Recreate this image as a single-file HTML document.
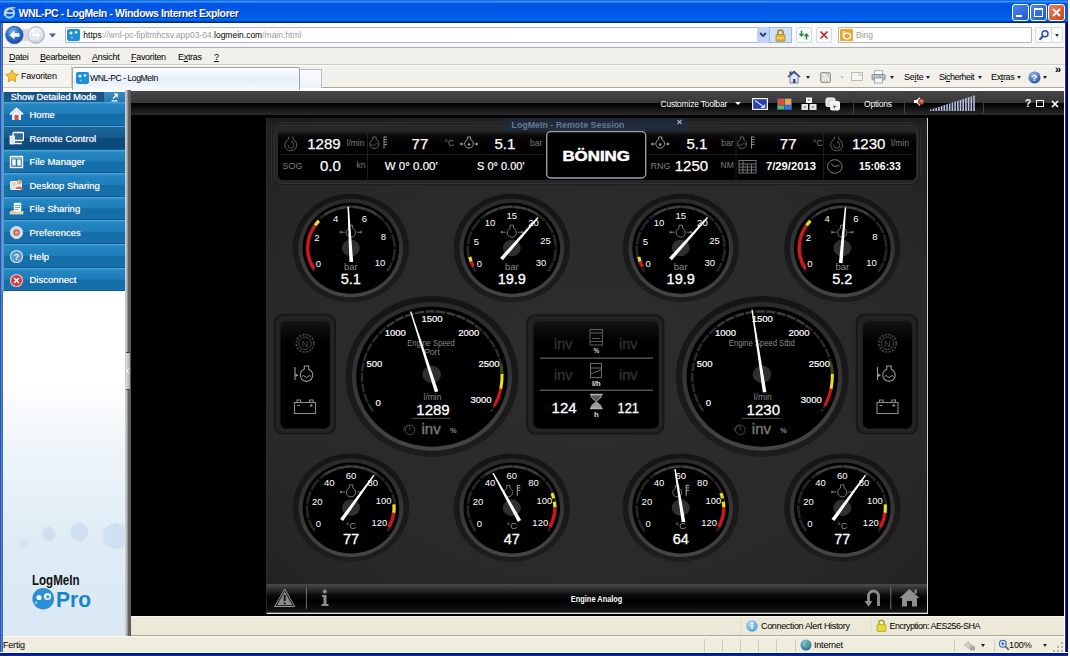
<!DOCTYPE html>
<html lang="de">
<head>
<meta charset="utf-8">
<title>WNL-PC - LogMeIn - Windows Internet Explorer</title>
<style>
*{box-sizing:border-box;margin:0;padding:0}
html,body{width:1070px;height:656px;overflow:hidden;background:#fff}
body{position:relative;font-family:"Liberation Sans",sans-serif;font-size:11px;color:#000}
.abs{position:absolute}
#win{position:absolute;left:0;top:0;width:1068.400px;height:656px;background:linear-gradient(90deg,#2254bd 0,#2254bd 1px,#5a86d4 1px,#5a86d4 2px,#466490 2px,#466490 3px,#fff 3px,#fff 1064px,#fff 1065px,#5565b4 1065px,#00007c 1066px,#00007c 1067.500px,#8c9ad6 1068.400px);overflow:hidden}
#title{position:absolute;left:0;top:0;width:1068.400px;height:22.800px;background:linear-gradient(#0058cc 0,#3c98ff 1.300px,#2a86f6 2px,#0a62e2 3px,#0054e4 4.500px,#0058e6 14px,#0066f2 20px,#0052cc 21.200px,#002a7c 22.300px,#002a7c 22.800px)}
#title .t{position:absolute;left:19px;top:4px;font-size:12.5px;font-weight:bold;color:#fff;letter-spacing:-.1px;text-shadow:1px 1px 0 #0a2a80;white-space:nowrap}
.cap{position:absolute;top:4px;width:17px;height:17px;border:1px solid #fff;border-radius:3px;background:linear-gradient(135deg,#4b87f0,#2356cf)}
#nav{position:absolute;left:3px;top:23px;width:1061px;height:24px;background:linear-gradient(#fdfdfe,#f3f6fb)}
#menu{position:absolute;left:3px;top:47px;width:1061px;height:19px;background:#f1f0ea;border-top:1px solid #aeaea2;border-bottom:1px solid #fbfbf8}
#menu span{position:absolute;top:4px;font-size:9px;letter-spacing:-.3px;white-space:nowrap}
#tabs{position:absolute;left:3px;top:66px;width:1061px;height:25.400px;background:linear-gradient(#f1f0ea 0,#f1f0ea 20.800px,#a8a89c 20.800px,#a8a89c 21.800px,#fdfdfb 21.800px);border-top:0}
#content{position:absolute;left:2px;top:90px;width:1062px;height:546px;overflow:hidden}
#status{position:absolute;left:3px;top:636px;width:1061px;height:16px;background:#efedde;border-top:1px solid #fbfaf5}
u{text-decoration:underline}
#title .t{left:18.500px;top:6.500px;font-size:10.500px;letter-spacing:-.38px}
.ie-logo{position:absolute;left:3px;top:6px;width:13px;height:13px}
.ab{position:absolute;top:4px;height:16px;background:#fff;border:1px solid #a9b7c9;border-radius:1px}
.nbtn{position:absolute;top:4px;width:16px;height:16px;background:#fbfcfd;border:1px solid #d5d9de;border-radius:2px}
.tb9{font-size:9px;white-space:nowrap;position:absolute}
.arr{position:absolute;width:0;height:0;border-left:2.5px solid transparent;border-right:2.5px solid transparent;border-top:3px solid #222}

</style>
</head>
<body>
<div id="win">
  <div id="title"><svg class="ie-logo" viewBox="0 0 13 13"><circle cx="6.5" cy="7" r="4.6" fill="none" stroke="#9fd0f5" stroke-width="2.2"/><path d="M2.5 7h8" stroke="#d8eefc" stroke-width="1.6"/><path d="M1 9.5C2 4 8 .5 12.5 2" fill="none" stroke="#f5d86a" stroke-width="1.2"/></svg><div class="t">WNL-PC - LogMeIn - Windows Internet Explorer</div>
<div class="cap" style="left:1012px"><i class="abs" style="left:3px;top:10px;width:6px;height:2px;background:#fff"></i></div>
<div class="cap" style="left:1030px"><i class="abs" style="left:3px;top:3px;width:9px;height:9px;border:1px solid #fff;border-top-width:2px"></i></div>
<div class="cap" style="left:1048px;background:linear-gradient(135deg,#e8855f,#c9421b)"><svg class="abs" style="left:2px;top:2px" width="11" height="11" viewBox="0 0 11 11"><path d="M2 2l7 7M9 2l-7 7" stroke="#fff" stroke-width="1.8"/></svg></div></div>
  <div class="abs" style="left:0;top:651.700px;width:1070px;height:4.300px;background:linear-gradient(#eefcff 0,#eefcff 1.100px,#00155e 1.300px,#00155e 2.200px,#0c2aa2 2.600px,#0418a0 4.300px)"></div>
<div id="nav">
<svg class="abs" style="left:0;top:0" width="64" height="24" viewBox="0 0 64 24">
 <defs>
  <radialGradient id="gb" cx=".4" cy=".3" r=".8"><stop offset="0" stop-color="#7db4ee"/><stop offset=".5" stop-color="#2a6fd0"/><stop offset="1" stop-color="#103c94"/></radialGradient>
  <radialGradient id="gf" cx=".4" cy=".3" r=".8"><stop offset="0" stop-color="#ffffff"/><stop offset=".6" stop-color="#e4e9f1"/><stop offset="1" stop-color="#bcc5d3"/></radialGradient>
 </defs>
 <path d="M11 2.5a9.5 9.5 0 1 0 .1 0zM33 3a9 9 0 1 0 .1 0z" fill="#c9d0da"/>
 <rect x="14" y="6" width="18" height="12" fill="#d5dbe4"/>
 <circle cx="11.5" cy="12" r="8.6" fill="url(#gb)" stroke="#2a4f95" stroke-width=".8"/>
 <path d="M6.5 12l5-4.6v2.8h5v3.6h-5v2.8z" fill="#fff"/>
 <circle cx="33" cy="12" r="8" fill="url(#gf)" stroke="#a9b2c0" stroke-width=".8"/>
 <path d="M38 12l-5-4.4v2.7h-4.6v3.4H33v2.7z" fill="#fff" stroke="#c5ccd8" stroke-width=".6"/>
 <path d="M46 10.5h7l-3.5 4z" fill="#3c5f95"/>
</svg>
<div class="ab" style="left:62.300px;width:726.300px">
  <svg class="abs" style="left:1px;top:1px" width="13" height="12" viewBox="0 0 13 12"><rect width="13" height="12" rx="2" fill="#1e8fd6"/><circle cx="4" cy="4" r="1.6" fill="#d9f0ff"/><circle cx="9" cy="3.4" r="1.3" fill="#d9f0ff"/><circle cx="5" cy="8.5" r="1" fill="#7fc6f0"/></svg>
  <span class="tb9" style="left:17px;top:2px;font-size:8.500px"><span style="color:#000">https</span><span style="color:#9a9a9a">://wnl-pc-fipltmhcsv.app03-04.</span><span style="color:#000">logmein.com</span><span style="color:#9a9a9a">/main.html</span></span>
  <div class="abs" style="left:690.300px;top:-1px;width:12px;height:16px;background:#c3d3f3;border-radius:2px"><svg class="abs" style="left:2px;top:5px" width="8" height="6" viewBox="0 0 8 6"><path d="M1 1l3 3 3-3" fill="none" stroke="#1f3f8c" stroke-width="1.8"/></svg></div>
  <div class="abs" style="left:702.300px;top:-1px;width:23px;height:16px;background:#cfe2f8;border:1px solid #9db9dc"><svg class="abs" style="left:5px;top:1px" width="11" height="13" viewBox="0 0 11 13"><path d="M2.8 6V3.8a2.7 2.7 0 0 1 5.4 0V6" fill="none" stroke="#b88a1c" stroke-width="1.6"/><rect x="1" y="5.6" width="9" height="6.6" rx=".8" fill="#e9b23a" stroke="#a87a14" stroke-width=".7"/><path d="M1.5 9h8" stroke="#f8e08a" stroke-width="1"/></svg></div>
</div>
<div class="nbtn" style="left:792.500px"><svg class="abs" style="left:1px;top:1px" width="12" height="12" viewBox="0 0 12 12"><path d="M3.5 1.5v5M1.5 4.8l2 2.2 2-2.2" fill="none" stroke="#2a8a3a" stroke-width="1.5"/><path d="M8.5 10.5v-5M6.500 7.200l2-2.200 2 2.200" fill="none" stroke="#2a8a3a" stroke-width="1.5"/></svg></div>
<div class="nbtn" style="left:812.500px"><svg class="abs" style="left:2px;top:2px" width="10" height="10" viewBox="0 0 10 10"><path d="M1.500 1.500l7 7M8.500 1.500l-7 7" stroke="#c8202c" stroke-width="1.7"/></svg></div>
<div class="ab" style="left:835px;width:194px;border-color:#b5b9a8">
  <svg class="abs" style="left:1px;top:1px" width="13" height="12" viewBox="0 0 13 12"><rect width="13" height="12" rx="1" fill="#f0a42c"/><ellipse cx="7" cy="7" rx="3.6" ry="2.8" fill="none" stroke="#fff" stroke-width="1.5"/><path d="M3.600 2v5" stroke="#fff" stroke-width="1.500"/></svg>
  <span class="tb9" style="left:17px;top:2px;color:#9a9a9a;font-size:8.500px">Bing</span>
</div>
<div class="nbtn" style="left:1032px;width:28px"><svg class="abs" style="left:2px;top:1px" width="12" height="12" viewBox="0 0 12 12"><circle cx="7" cy="4.700" r="3" fill="#eaf2ff" stroke="#2a4fa5" stroke-width="1.500"/><path d="M4.800 7.200L1.500 10.700" stroke="#2a4fa5" stroke-width="2"/></svg><i class="abs" style="left:15px;top:0;width:1px;height:14px;background:#d5d9de"></i><i class="arr" style="left:19px;top:6px;border-top-color:#334"></i></div>
</div>
  <div id="menu">
    <span style="left:6.0px"><u>D</u>atei</span>
    <span style="left:37.0px"><u>B</u>earbeiten</span>
    <span style="left:89.0px"><u>A</u>nsicht</span>
    <span style="left:128.0px"><u>F</u>avoriten</span>
    <span style="left:175.0px">E<u>x</u>tras</span>
    <span style="left:211.0px"><u>?</u></span>
  </div>
  <div id="tabs">
<div class="abs" style="left:0;top:0;width:69px;height:22px;border-right:1px solid #cfccbc;border-bottom:1px solid #cfccbc;background:#f4f3ee"></div>
<svg class="abs" style="left:2px;top:3px" width="14" height="14" viewBox="0 0 14 14"><path d="M7 .8l1.900 4.100 4.400.5-3.300 3 .9 4.400L7 10.600 3.100 12.800l.9-4.400-3.300-3 4.400-.5z" fill="#f7c52c" stroke="#c88a10" stroke-width=".8"/></svg>
<span class="tb9" style="left:18px;top:5px;letter-spacing:-.2px">Favoriten</span>
<div class="abs" style="left:69px;top:1px;width:228px;height:23px;border:1px solid #98a3b5;border-bottom:0;border-radius:2px 2px 0 0;background:linear-gradient(#fdfeff,#e6eefb 55%,#f7f9fd)"></div>
<svg class="abs" style="left:73px;top:6px" width="13" height="12" viewBox="0 0 13 12"><rect width="13" height="12" rx="2" fill="#1e8fd6"/><circle cx="4" cy="4" r="1.600" fill="#d9f0ff"/><circle cx="9" cy="3.400" r="1.300" fill="#d9f0ff"/><circle cx="5" cy="8.500" r="1" fill="#7fc6f0"/></svg>
<span class="tb9" style="left:87px;top:7px;letter-spacing:-.5px;font-size:8.700px">WNL-PC - LogMeIn</span>
<div class="abs" style="left:297px;top:3px;width:22px;height:19px;border:1px solid #b7bdc9;border-left:0;border-bottom:0;background:linear-gradient(#fbfcfe,#edf1f8)"></div>
<div class="abs" style="left:0;top:-2.200px;width:1062px;height:1px;background:#cfccc4"></div>
<!-- right command bar -->
<svg class="abs" style="left:784px;top:4px" width="14" height="14" viewBox="0 0 14 14"><path d="M1 7l6-5.500L13 7" fill="none" stroke="#35466e" stroke-width="1.600"/><path d="M3 6.500V13h8V6.500L7 3z" fill="#dfe8f6" stroke="#5a6c94" stroke-width=".8"/><rect x="6" y="9" width="2.400" height="4" fill="#35466e"/><rect x="2.500" y="1.500" width="2" height="3" fill="#35466e"/></svg>
<i class="arr" style="left:803px;top:10px"></i>
<svg class="abs" style="left:817px;top:6px" width="11" height="11" viewBox="0 0 11 11"><rect x=".5" y=".5" width="10" height="10" rx="1.500" fill="#cfcfc8" stroke="#9a9a90"/><circle cx="3" cy="8" r="1" fill="#fff"/><path d="M2.200 5.200a3.600 3.600 0 0 1 3.600 3.600M2.200 2.600a6.200 6.200 0 0 1 6.200 6.200" fill="none" stroke="#fff" stroke-width="1.100"/></svg>
<i class="arr" style="left:837px;top:10px;border-top-color:#c8c6ba"></i>
<svg class="abs" style="left:848px;top:6px" width="12" height="10" viewBox="0 0 12 10"><rect x=".5" y=".5" width="11" height="8" fill="#f4f4f2" stroke="#b9b9b2"/><rect x="7.500" y="1.500" width="3" height="2.500" fill="#d9d3d0"/></svg>
<svg class="abs" style="left:868px;top:4px" width="15" height="14" viewBox="0 0 15 14"><rect x="3.500" y=".8" width="8" height="4" fill="#fff" stroke="#8a8f98" stroke-width=".7"/><rect x="1" y="4.500" width="13" height="5.500" rx="1" fill="#b8bcc4" stroke="#6f7580" stroke-width=".7"/><rect x="3.500" y="8" width="8" height="5" fill="#f6f6f6" stroke="#8a8f98" stroke-width=".7"/></svg>
<i class="arr" style="left:887px;top:10px"></i>
<span class="tb9" style="left:901px;top:6px;letter-spacing:-.2px">Se<u>i</u>te</span><i class="arr" style="left:923px;top:10px"></i>
<span class="tb9" style="left:936px;top:6px;letter-spacing:-.5px">Si<u>c</u>herheit</span><i class="arr" style="left:975px;top:10px"></i>
<span class="tb9" style="left:988px;top:6px;letter-spacing:-.35px">Ex<u>t</u>ras</span><i class="arr" style="left:1014px;top:10px"></i>
<svg class="abs" style="left:1025px;top:5px" width="13" height="13" viewBox="0 0 13 13"><defs><radialGradient id="gh" cx=".4" cy=".3" r=".8"><stop offset="0" stop-color="#9dbdf2"/><stop offset="1" stop-color="#1c3fa8"/></radialGradient></defs><circle cx="6.500" cy="6.500" r="6" fill="url(#gh)"/><text x="6.500" y="10" font-size="9.500" font-weight="bold" fill="#fff" text-anchor="middle" font-family="Liberation Sans,sans-serif">?</text></svg>
<i class="arr" style="left:1040px;top:10px"></i>
<span class="abs" style="left:1052px;top:-3px;font-size:11px;font-weight:bold">»</span>
</div>
  <div id="content"><div class="abs" style="left:-2px;top:-90px;width:1070px;height:656px">
<div class="abs" style="left:3px;top:90px;width:122px;height:546px;background:linear-gradient(#fff 0,#fff 285px,#eef5fa 360px,#dfecf5 450px,#d9e8f3 546px)"></div>
<div class="abs" style="left:2px;top:91.700px;width:2px;height:200px;background:#58a0b6"></div>
<div class="abs" style="left:4px;top:91.700px;width:121px;height:11.300px;background:linear-gradient(#15507f,#1b5c8e)"><span class="abs" style="left:6.700px;top:0;font-size:9.300px;line-height:11.500px;color:#fff;white-space:nowrap;text-shadow:0 0 1px #cde">Show Detailed Mode</span><div class="abs" style="left:100px;top:.8px;width:20.500px;height:10.500px;background:linear-gradient(#3f8cc4,#2573ab)"><svg class="abs" style="left:7px;top:1px" width="8" height="9" viewBox="0 0 8 9"><path d="M2 5.500l4-4M3 1.200h3.200v3.200M.5 7.800h6" fill="none" stroke="#fff" stroke-width="1.200"/></svg></div></div>
<div class="abs" style="left:4px;top:102px;width:121px;height:24px;background:linear-gradient(#3a98d0 0,#2586c2 8%,#1e7dba 48%,#146da8 52%,#1670ac 100%);border-bottom:1px solid #0f5890;border-top:1px solid #4aa2d6"><svg class="abs" style="left:5px;top:4px" width="15" height="15" viewBox="0 0 15 15"><path d="M1 7.500L7.500 1.500 14 7.500" fill="none" stroke="#fff" stroke-width="1.800"/><path d="M3 7v6h9V7L7.500 3z" fill="#e8f0f8"/><rect x="5.500" y="8" width="4" height="5" fill="#c9564a"/></svg><span class="abs" style="left:25.500px;top:0;line-height:23px;font-size:9.500px;color:#fff;white-space:nowrap;text-shadow:0 0 1px #bcd">Home</span></div>
<div class="abs" style="left:4px;top:126px;width:121px;height:24px;background:linear-gradient(#1d679c 0,#155a8e 48%,#0d4a7c 52%,#0f4c7e 100%);border-bottom:1px solid #0f5890;border-top:1px solid #4aa2d6"><svg class="abs" style="left:5px;top:4px" width="15" height="15" viewBox="0 0 15 15"><rect x="4" y="1.500" width="10.500" height="8" rx="1" fill="#2a6a9c" stroke="#fff" stroke-width="1.300"/><rect x="1" y="5" width="4.500" height="8" fill="#dfe8f0" stroke="#fff" stroke-width=".8"/><path d="M6 12.500h7" stroke="#fff" stroke-width="1.500"/></svg><span class="abs" style="left:25.500px;top:0;line-height:23px;font-size:9.500px;color:#fff;white-space:nowrap;text-shadow:0 0 1px #bcd">Remote Control</span></div>
<div class="abs" style="left:4px;top:150px;width:121px;height:23px;background:linear-gradient(#3a98d0 0,#2586c2 8%,#1e7dba 48%,#146da8 52%,#1670ac 100%);border-bottom:1px solid #0f5890;border-top:1px solid #4aa2d6"><svg class="abs" style="left:5px;top:4px" width="15" height="15" viewBox="0 0 15 15"><rect x="1.500" y="1.500" width="12" height="11" fill="#2a76b0" stroke="#fff" stroke-width="1.400"/><rect x="3.300" y="4.500" width="3.400" height="6" fill="#fff"/><rect x="8.300" y="4.500" width="3.400" height="6" fill="#fff"/><path d="M2 3h11" stroke="#cfe4f5" stroke-width="1"/></svg><span class="abs" style="left:25.500px;top:0;line-height:22px;font-size:9.500px;color:#fff;white-space:nowrap;text-shadow:0 0 1px #bcd">File Manager</span></div>
<div class="abs" style="left:4px;top:173px;width:121px;height:24px;background:linear-gradient(#3a98d0 0,#2586c2 8%,#1e7dba 48%,#146da8 52%,#1670ac 100%);border-bottom:1px solid #0f5890;border-top:1px solid #4aa2d6"><svg class="abs" style="left:5px;top:4px" width="15" height="15" viewBox="0 0 15 15"><rect x="1.500" y="3.500" width="11" height="8" rx="1" fill="#dfe8f0" stroke="#fff" stroke-width="1"/><circle cx="10.500" cy="4" r="2.300" fill="#e8a868"/><path d="M6.500 11c0-3 8-3 8 0z" fill="#d8604a"/><circle cx="5" cy="6" r="1.800" fill="#e8c898"/></svg><span class="abs" style="left:25.500px;top:0;line-height:23px;font-size:9.500px;color:#fff;white-space:nowrap;text-shadow:0 0 1px #bcd">Desktop Sharing</span></div>
<div class="abs" style="left:4px;top:197px;width:121px;height:23px;background:linear-gradient(#3a98d0 0,#2586c2 8%,#1e7dba 48%,#146da8 52%,#1670ac 100%);border-bottom:1px solid #0f5890;border-top:1px solid #4aa2d6"><svg class="abs" style="left:5px;top:4px" width="15" height="15" viewBox="0 0 15 15"><rect x="5" y="1" width="7" height="9" fill="#fff" stroke="#c8d8e8" stroke-width=".6"/><path d="M6 3.500h5M6 5.500h5M6 7.500h3" stroke="#5a8ab8" stroke-width=".8"/><path d="M1 10c2-2 4-1 6 0s5 1 7-1v3H1z" fill="#e8c070" stroke="#fff" stroke-width=".6"/></svg><span class="abs" style="left:25.500px;top:0;line-height:22px;font-size:9.500px;color:#fff;white-space:nowrap;text-shadow:0 0 1px #bcd">File Sharing</span></div>
<div class="abs" style="left:4px;top:220px;width:121px;height:24px;background:linear-gradient(#3a98d0 0,#2586c2 8%,#1e7dba 48%,#146da8 52%,#1670ac 100%);border-bottom:1px solid #0f5890;border-top:1px solid #4aa2d6"><svg class="abs" style="left:5px;top:4px" width="15" height="15" viewBox="0 0 15 15"><circle cx="7.500" cy="7.500" r="6" fill="#c9d9e8" stroke="#e8f0f8" stroke-width="1"/><circle cx="7.500" cy="7.500" r="3.200" fill="#d8604a"/><circle cx="7.500" cy="7.500" r="1.300" fill="#f0d0c0"/></svg><span class="abs" style="left:25.500px;top:0;line-height:23px;font-size:9.500px;color:#fff;white-space:nowrap;text-shadow:0 0 1px #bcd">Preferences</span></div>
<div class="abs" style="left:4px;top:244px;width:121px;height:24px;background:linear-gradient(#3a98d0 0,#2586c2 8%,#1e7dba 48%,#146da8 52%,#1670ac 100%);border-bottom:1px solid #0f5890;border-top:1px solid #4aa2d6"><svg class="abs" style="left:5px;top:4px" width="15" height="15" viewBox="0 0 15 15"><circle cx="7.500" cy="7.500" r="6" fill="#5a98c8" stroke="#cfe0ee" stroke-width="1.200"/><text x="7.500" y="11" font-size="9" font-weight="bold" fill="#e8f2fa" text-anchor="middle" font-family="Liberation Sans,sans-serif">?</text></svg><span class="abs" style="left:25.500px;top:0;line-height:23px;font-size:9.500px;color:#fff;white-space:nowrap;text-shadow:0 0 1px #bcd">Help</span></div>
<div class="abs" style="left:4px;top:268px;width:121px;height:23px;background:linear-gradient(#3a98d0 0,#2586c2 8%,#1e7dba 48%,#146da8 52%,#1670ac 100%);border-bottom:1px solid #0f5890;border-top:1px solid #4aa2d6"><svg class="abs" style="left:5px;top:4px" width="15" height="15" viewBox="0 0 15 15"><circle cx="7.500" cy="7.500" r="6" fill="#d8343c" stroke="#f0c0c0" stroke-width="1.200"/><path d="M5 5l5 5M10 5l-5 5" stroke="#fff" stroke-width="1.600"/></svg><span class="abs" style="left:25.500px;top:0;line-height:22px;font-size:9.500px;color:#fff;white-space:nowrap;text-shadow:0 0 1px #bcd">Disconnect</span></div>
<svg class="abs" style="left:3px;top:500px" width="122" height="136" viewBox="3 500 122 136"><g fill="#cfe1f0"><circle cx="23.500" cy="543.500" r="4.500" opacity=".7"/><circle cx="48.700" cy="533.700" r="7"/><circle cx="79.400" cy="532" r="9"/><circle cx="116" cy="536" r="13"/></g><text x="32" y="584.500" font-size="14.500" font-weight="bold" fill="#111" font-family="Liberation Sans,sans-serif" textLength="47.500" lengthAdjust="spacingAndGlyphs">LogMeIn</text><circle cx="43.200" cy="598.700" r="10.800" fill="#2b8fd6"/><circle cx="39" cy="597.500" r="2.600" fill="#eaf5fd"/><circle cx="47.500" cy="596.500" r="3.600" fill="#eaf5fd"/><circle cx="36" cy="603" r="1.400" fill="#8fcaf0"/><circle cx="47.800" cy="596.800" r="1.500" fill="#2b8fd6"/><text x="56" y="607" font-size="22.500" font-weight="bold" fill="#1b82cc" font-family="Liberation Sans,sans-serif" textLength="35" lengthAdjust="spacingAndGlyphs">Pro</text></svg>
<div class="abs" style="left:125px;top:90px;width:6px;height:546px;background:linear-gradient(90deg,#d0d0d0 0,#b8b8b8 35%,#6a6a6a 50%,#555 100%)"></div>
<div class="abs" style="left:125.500px;top:352px;width:4.500px;height:38px;background:linear-gradient(90deg,#e0e0e0,#a8a8a8);border-top:1px solid #444;border-bottom:1px solid #444"><svg class="abs" style="left:.5px;top:15px" width="4" height="6" viewBox="0 0 4 6"><path d="M3 .5L1 3l2 2.500" fill="none" stroke="#fff" stroke-width="1"/></svg></div>
<div id="mainblack" class="abs" style="left:131px;top:91px;width:933px;height:526px;background:#000"></div>
<div class="abs" style="left:131px;top:91px;width:933px;height:23.500px;background:linear-gradient(#4a4a4a 0,#424242 10%,#383838 49%,#000 51%,#0c0c0c 65%,#2b2b2b 100%)"></div>

<span class="abs" style="left:660.500px;top:99px;font-size:8.500px;letter-spacing:-.22px;color:#fff;white-space:nowrap;line-height:11px">Customize Toolbar</span>
<i class="arr" style="left:735px;top:102px;border-top-color:#fff;border-left-width:3px;border-right-width:3px;border-top-width:3.500px"></i>
<svg class="abs" style="left:752px;top:98px" width="16" height="12" viewBox="0 0 16 12"><rect x=".6" y=".6" width="14.800" height="10.800" fill="#2b3fae" stroke="#f4f4f4" stroke-width="1.200"/><path d="M3 2.500l9 6.500M9 9.300h3.500v-2.800" fill="none" stroke="#cfd8ff" stroke-width="1.300"/></svg>
<svg class="abs" style="left:777px;top:98px" width="15" height="12" viewBox="0 0 15 12"><rect width="15" height="12" fill="#2a4fb8"/><rect x=".8" y=".8" width="6.200" height="6" fill="#e8502c"/><rect x="7.800" y=".8" width="6.400" height="6" fill="#f0a830"/><rect x=".8" y="7.400" width="6.200" height="3.800" fill="#58b848"/><rect x="7.800" y="7.400" width="6.400" height="3.800" fill="#3a78d8"/></svg>
<svg class="abs" style="left:801px;top:97px" width="16" height="14" viewBox="0 0 16 14"><rect x="5" y=".5" width="6" height="5.500" fill="#f4f4f4"/><rect x=".5" y="7" width="6.500" height="6" fill="#e4e4e4"/><rect x="8.500" y="7" width="7" height="6" fill="#e4e4e4"/><path d="M7 3h2M3 10h2M11 10h2" stroke="#555" stroke-width="1"/></svg>
<svg class="abs" style="left:825px;top:97px" width="16" height="14" viewBox="0 0 16 14"><rect x="1" y="1" width="9" height="8.500" rx="1.500" fill="#d8d8d8" stroke="#fff" stroke-width="1"/><rect x="5.500" y="4.500" width="9" height="8.500" rx="1.500" fill="#f2f2f2" stroke="#fff" stroke-width="1"/><path d="M8 8.500l4 1-2 .6-.6 2z" fill="#444"/></svg>
<i class="abs" style="left:853px;top:92px;width:1px;height:22px;background:#3e3e3e"></i>
<i class="abs" style="left:904px;top:92px;width:1px;height:22px;background:#3e3e3e"></i>
<i class="abs" style="left:983px;top:92px;width:1px;height:22px;background:#3e3e3e"></i>
<span class="abs" style="left:864px;top:99px;font-size:8.500px;letter-spacing:-.2px;color:#fff;white-space:nowrap;line-height:11px">Options</span>
<svg class="abs" style="left:913px;top:96px" width="12" height="11" viewBox="0 0 12 11"><path d="M1 4h2.500L7 1v9L3.500 7H1z" fill="#f4f4f4"/><circle cx="8" cy="5.800" r="3" fill="#b8402c"/><circle cx="8.600" cy="5" r="1.200" fill="#e89880"/></svg>
<svg class="abs" style="left:930px;top:94.500px" width="47" height="16" viewBox="0 0 47 16"><g fill="#b7c2e0"><rect x="0.0" y="14.5" width="1.600" height="1.5"/><rect x="2.7" y="13.6" width="1.600" height="2.4"/><rect x="5.4" y="12.8" width="1.600" height="3.2"/><rect x="8.1" y="11.9" width="1.600" height="4.1"/><rect x="10.8" y="11.0" width="1.600" height="5.0"/><rect x="13.5" y="10.1" width="1.600" height="5.9"/><rect x="16.2" y="9.2" width="1.600" height="6.8"/><rect x="18.9" y="8.4" width="1.600" height="7.6"/><rect x="21.6" y="7.5" width="1.600" height="8.5"/><rect x="24.3" y="6.6" width="1.600" height="9.4"/><rect x="27.0" y="5.8" width="1.600" height="10.2"/><rect x="29.7" y="4.9" width="1.600" height="11.1"/><rect x="32.4" y="4.0" width="1.600" height="12.0"/><rect x="35.1" y="3.1" width="1.600" height="12.9"/><rect x="37.8" y="2.2" width="1.600" height="13.8"/><rect x="40.5" y="1.4" width="1.600" height="14.6"/><rect x="43.2" y="0.5" width="1.600" height="15.5"/></g></svg>
<span class="abs" style="left:1025px;top:98px;font-size:10px;font-weight:bold;color:#fff;line-height:12px">?</span>
<i class="abs" style="left:1036px;top:100px;width:8px;height:7px;border:1.500px solid #fff"></i>
<svg class="abs" style="left:1051px;top:100px" width="8" height="8" viewBox="0 0 8 8"><path d="M1 1l6 6M7 1l-6 6" stroke="#fff" stroke-width="1.700"/></svg>
<svg class="abs" style="left:266px;top:118px" width="662" height="496" viewBox="266 118 662 496" font-family="Liberation Sans,sans-serif">
<defs>
<radialGradient id="bgd" cx=".5" cy=".5" r=".75"><stop offset="0" stop-color="#2d2d2d"/><stop offset=".65" stop-color="#292929"/><stop offset="1" stop-color="#1f1f1f"/></radialGradient>
<linearGradient id="bz1" x1="0" y1="0" x2="0" y2="1"><stop offset="0" stop-color="#151515"/><stop offset="1" stop-color="#1d1d1d"/></linearGradient>
<linearGradient id="bz2" x1="0" y1="0" x2="0" y2="1"><stop offset="0" stop-color="#2a2a2a"/><stop offset=".5" stop-color="#353535"/><stop offset="1" stop-color="#454545"/></linearGradient>
<linearGradient id="bar" x1="0" y1="0" x2="0" y2="1"><stop offset="0" stop-color="#555"/><stop offset=".08" stop-color="#3c3c3c"/><stop offset=".4" stop-color="#0a0a0a"/><stop offset=".6" stop-color="#000"/><stop offset="1" stop-color="#171717"/></linearGradient>
<linearGradient id="pnl" x1="0" y1="0" x2="0" y2="1"><stop offset="0" stop-color="#131313"/><stop offset=".2" stop-color="#000"/><stop offset="1" stop-color="#000"/></linearGradient>
<linearGradient id="pnl2" x1="0" y1="0" x2="0" y2="1"><stop offset="0" stop-color="#2a2a2a"/><stop offset=".12" stop-color="#0a0a0a"/><stop offset=".3" stop-color="#000"/><stop offset="1" stop-color="#000"/></linearGradient>
</defs>
<rect x="265.700" y="118" width="662.300" height="496" fill="url(#bgd)"/>
<rect x="266" y="118" width="662" height="5" fill="#1b1b1b" opacity=".6"/>
<rect x="271.500" y="122.500" width="649" height="63.500" rx="9" fill="#1d1d1d" stroke="#2e2e2e" stroke-width="1"/>
<rect x="274" y="125" width="644" height="58.500" rx="7.500" fill="#262626" stroke="#343434" stroke-width="1"/>
<rect x="277.500" y="129.500" width="639" height="51" rx="5.500" fill="url(#pnl2)" stroke="#2c2c2c" stroke-width=".8"/>
<path d="M280 154.500h264M648 154.500h266M367.500 131v48M736 131v48M823.600 131v48" stroke="#1f1f1f" stroke-width="1"/>
<g fill="none" stroke="#5e5e5e" stroke-width="1"><path d="M288.8 136.6l-.5 2.800a6 6 0 1 0 5 0l-.5-2.800"/><path d="M288 144.8a3 3 0 1 0 3.500-2.500" stroke-width=".9"/><path d="M291 141.7l2-1-.3 2.300z" fill="#5e5e5e" stroke="none"/></g>
<text x="340.6" y="148.5" font-size="15" fill="#fff" text-anchor="end" stroke="#fff" stroke-width=".25">1289</text>
<text x="346.5" y="145.5" font-size="8.5" fill="#7d7d7d" text-anchor="start">l/min</text>
<g fill="none" stroke="#5e5e5e" stroke-width="1"><path d="M372.8 137v2.600a4.600 4.600 0 1 0 3.400 0v-2.600z"/><path d="M370.5 144.5q2 2 4 0t4 0" stroke-width=".8"/><path d="M384 136.5v12M384 137h3M384 139.5h3M384 142h3M384 144.5h3" stroke="#8a8a8a"/></g>
<text x="428.3" y="148.5" font-size="15" fill="#fff" text-anchor="end" stroke="#fff" stroke-width=".25">77</text>
<text x="444.5" y="145.5" font-size="8.5" fill="#7d7d7d" text-anchor="start">°C</text>
<g fill="none" stroke="#9a9a9a" stroke-width="1"><path d="M467.4 137v2.600a4.400 4.400 0 1 0 3.200 0v-2.600z"/><path d="M463.5 144h-3M474.5 144h3"/><circle cx="469" cy="144.5" r="1.300" fill="#9a9a9a" stroke="none"/><path d="M459.5 144l2.600-1.700v3.400zM478.5 144l-2.600-1.700v3.400z" fill="#9a9a9a" stroke="none"/></g>
<text x="515.3" y="148.5" font-size="15" fill="#fff" text-anchor="end" stroke="#fff" stroke-width=".25">5.1</text>
<text x="530" y="145.5" font-size="8.5" fill="#7d7d7d" text-anchor="start">bar</text>
<text x="282.4" y="168.9" font-size="9" fill="#7d7d7d" text-anchor="start">SOG</text>
<text x="340.8" y="171.4" font-size="15" fill="#fff" text-anchor="end" stroke="#fff" stroke-width=".25">0.0</text>
<text x="356.5" y="168.4" font-size="8.5" fill="#7d7d7d" text-anchor="start">kn</text>
<text x="384.800" y="170.1" font-size="11.500" fill="#fff" stroke="#fff" stroke-width=".2">W 0° 0.00'</text>
<text x="477" y="170.1" font-size="11" fill="#fff" stroke="#fff" stroke-width=".2" textLength="47.500" lengthAdjust="spacingAndGlyphs">S 0° 0.00'</text>
<rect x="546.700" y="131.500" width="99" height="46.500" rx="4" fill="#000" stroke="#98a0a6" stroke-width="1.400"/>
<text x="596.200" y="161.200" font-size="14" font-weight="bold" fill="#fff" text-anchor="middle" textLength="67.500" lengthAdjust="spacingAndGlyphs" stroke="#fff" stroke-width=".5">BÖNING</text>
<g fill="none" stroke="#9a9a9a" stroke-width="1"><path d="M658.6 137v2.600a4.400 4.400 0 1 0 3.200 0v-2.600z"/><path d="M654.7 144h-3M665.7 144h3"/><circle cx="660.2" cy="144.5" r="1.300" fill="#9a9a9a" stroke="none"/><path d="M650.7 144l2.600-1.700v3.400zM669.7 144l-2.600-1.700v3.400z" fill="#9a9a9a" stroke="none"/></g>
<text x="707.4" y="148.5" font-size="15" fill="#fff" text-anchor="end" stroke="#fff" stroke-width=".25">5.1</text>
<text x="721.3" y="145.5" font-size="8.5" fill="#7d7d7d" text-anchor="start">bar</text>
<g fill="none" stroke="#5e5e5e" stroke-width="1"><path d="M740.3 137v2.600a4.600 4.600 0 1 0 3.400 0v-2.600z"/><path d="M738 144.5q2 2 4 0t4 0" stroke-width=".8"/><path d="M751.5 136.5v12M751.5 137h3M751.5 139.5h3M751.5 142h3M751.5 144.5h3" stroke="#8a8a8a"/></g>
<text x="796.5" y="148.5" font-size="15" fill="#fff" text-anchor="end" stroke="#fff" stroke-width=".25">77</text>
<text x="813" y="145.5" font-size="8.5" fill="#7d7d7d" text-anchor="start">°C</text>
<g fill="none" stroke="#5e5e5e" stroke-width="1"><path d="M834.6 136.6l-.5 2.800a6 6 0 1 0 5 0l-.5-2.800"/><path d="M833.8 144.8a3 3 0 1 0 3.500-2.500" stroke-width=".9"/><path d="M836.8 141.7l2-1-.3 2.300z" fill="#5e5e5e" stroke="none"/></g>
<text x="885.4" y="148.5" font-size="15" fill="#fff" text-anchor="end" stroke="#fff" stroke-width=".25">1230</text>
<text x="891" y="145.5" font-size="8.5" fill="#7d7d7d" text-anchor="start">l/min</text>
<text x="650.4" y="168.9" font-size="9" fill="#7d7d7d" text-anchor="start">RNG</text>
<text x="708.1" y="171.4" font-size="15" fill="#fff" text-anchor="end" stroke="#fff" stroke-width=".25">1250</text>
<text x="720.5" y="168.4" font-size="8.5" fill="#7d7d7d" text-anchor="start">NM</text>
<g fill="none" stroke="#7d7d7d" stroke-width=".9"><rect x="739" y="160.500" width="17" height="12.500"/><path d="M739 164h17M743 160.500v12.500M747.250 164v9M751.500 164v9M739 167h17M739 170h17"/></g>
<text x="766" y="169.9" font-size="11" font-weight="bold" fill="#fff" textLength="50" lengthAdjust="spacingAndGlyphs">7/29/2013</text>
<g fill="none" stroke="#7d7d7d" stroke-width="1"><ellipse cx="834.800" cy="166.500" rx="7.300" ry="6.800"/><path d="M834.800 166.500l-3.500-2.500M834.800 166.500l4.500-1"/></g>
<text x="859" y="169.9" font-size="10.500" font-weight="bold" fill="#fff" textLength="41.700" lengthAdjust="spacingAndGlyphs">15:06:33</text>
<rect x="503.500" y="118.500" width="184" height="12.500" fill="#1b2f4a" opacity=".6"/>
<text x="511.500" y="128" font-size="8.500" font-weight="bold" fill="#647a92" textLength="113" lengthAdjust="spacingAndGlyphs">LogMeIn - Remote Session</text>
<path d="M677.500 120l4 4M681.500 120l-4 4" stroke="#9aa6b2" stroke-width="1.200"/>
<ellipse cx="350.8" cy="248" rx="58.2" ry="54.3" fill="url(#bz1)"/>
<ellipse cx="350.8" cy="248" rx="52.3" ry="49.2" fill="url(#bz2)"/>
<ellipse cx="350.8" cy="248.3" rx="48.3" ry="45.5" fill="#000"/>
<path d="M314.55 271.39A43.98 41.3 0 1 1 387.05 271.39" fill="none" stroke="#262626" stroke-width="2.6" stroke-dasharray="13 1.5"/>
<path d="M324.95 214.59A43.98 41.3 0 0 1 376.65 214.59" fill="none" stroke="#3e3e3e" stroke-width="2.4" stroke-dasharray="13 1.5"/>
<path d="M313.98 268.9A43.03 40.4 0 0 1 315.16 225.36" fill="none" stroke="#d8141c" stroke-width="3.2"/>
<path d="M315.16 225.36A43.03 40.4 0 0 1 318.94 220.84" fill="none" stroke="#e8e020" stroke-width="3.2"/>
<text x="318.32" y="266.8" font-size="9.5" fill="#fff" text-anchor="middle">0</text>
<text x="316.8" y="241.13" font-size="9.5" fill="#fff" text-anchor="middle">2</text>
<text x="335.61" y="221.55" font-size="9.5" fill="#fff" text-anchor="middle">4</text>
<text x="364.49" y="221.55" font-size="9.5" fill="#fff" text-anchor="middle">6</text>
<text x="383.3" y="240.23" font-size="9.5" fill="#fff" text-anchor="middle">8</text>
<text x="379.98" y="265.9" font-size="9.5" fill="#fff" text-anchor="middle">10</text>
<ellipse cx="350.8" cy="248" rx="9" ry="8.2" fill="#303030"/>
<g fill="none" stroke="#777" stroke-width="1"><path d="M349 225.2v3.2a4.6 4.6 0 1 0 3.6 0v-3.200z"/><path d="M344.8 232.2h-5M356.8 232.2h5"/><path d="M342.3 232.2l-2.400-1.600v3.200zM359.3 232.2l2.400-1.600v3.200z" fill="#777" stroke="none"/></g>
<path d="M353.15 261.9L348.9 206.76L347.5 206.84L349.45 262.1z" fill="#fff"/>
<text x="350.8" y="269.5" font-size="9.5" fill="#8a8a8a" text-anchor="middle">bar</text>
<text x="350.8" y="284" font-size="14.5" fill="#fff" text-anchor="middle" stroke="#fff" stroke-width=".3">5.1</text>
<ellipse cx="511.8" cy="248" rx="58.2" ry="54.3" fill="url(#bz1)"/>
<ellipse cx="511.8" cy="248" rx="52.3" ry="49.2" fill="url(#bz2)"/>
<ellipse cx="511.8" cy="248.3" rx="48.3" ry="45.5" fill="#000"/>
<path d="M475.55 271.39A43.98 41.3 0 1 1 548.05 271.39" fill="none" stroke="#262626" stroke-width="2.6" stroke-dasharray="13 1.5"/>
<path d="M485.95 214.59A43.98 41.3 0 0 1 537.65 214.59" fill="none" stroke="#3e3e3e" stroke-width="2.4" stroke-dasharray="13 1.5"/>
<path d="M473.56 266.51A43.03 40.4 0 0 1 471.24 261.49" fill="none" stroke="#d8141c" stroke-width="3.2"/>
<path d="M471.24 261.49A43.03 40.4 0 0 1 469.8 256.76" fill="none" stroke="#e8e020" stroke-width="3.2"/>
<text x="479.32" y="266.8" font-size="9.5" fill="#fff" text-anchor="middle">0</text>
<text x="476.49" y="245.36" font-size="9.5" fill="#fff" text-anchor="middle">5</text>
<text x="490.1" y="226.08" font-size="9.5" fill="#fff" text-anchor="middle">10</text>
<text x="511.8" y="218.9" font-size="9.5" fill="#fff" text-anchor="middle">15</text>
<text x="533.5" y="226.08" font-size="9.5" fill="#fff" text-anchor="middle">20</text>
<text x="545.61" y="244.46" font-size="9.5" fill="#fff" text-anchor="middle">25</text>
<text x="540.98" y="265.9" font-size="9.5" fill="#fff" text-anchor="middle">30</text>
<ellipse cx="511.8" cy="248" rx="9" ry="8.2" fill="#303030"/>
<g fill="none" stroke="#777" stroke-width="1"><path d="M510 225.2v3.2a4.6 4.6 0 1 0 3.6 0v-3.200z"/><path d="M505.8 232.2h-5M517.8 232.2h5"/><path d="M503.3 232.2l-2.400-1.600v3.200zM520.3 232.2l2.400-1.600v3.200z" fill="#777" stroke="none"/></g>
<path d="M502.89 260.22L538.53 217.96L537.47 217.04L500.11 257.78z" fill="#fff"/>
<text x="511.8" y="269.5" font-size="9.5" fill="#8a8a8a" text-anchor="middle">bar</text>
<text x="511.8" y="284" font-size="14.5" fill="#fff" text-anchor="middle" stroke="#fff" stroke-width=".3">19.9</text>
<ellipse cx="680.7" cy="248" rx="58.2" ry="54.3" fill="url(#bz1)"/>
<ellipse cx="680.7" cy="248" rx="52.3" ry="49.2" fill="url(#bz2)"/>
<ellipse cx="680.7" cy="248.3" rx="48.3" ry="45.5" fill="#000"/>
<path d="M644.45 271.39A43.98 41.3 0 1 1 716.95 271.39" fill="none" stroke="#262626" stroke-width="2.6" stroke-dasharray="13 1.5"/>
<path d="M654.85 214.59A43.98 41.3 0 0 1 706.55 214.59" fill="none" stroke="#3e3e3e" stroke-width="2.4" stroke-dasharray="13 1.5"/>
<path d="M642.46 266.51A43.03 40.4 0 0 1 640.14 261.49" fill="none" stroke="#d8141c" stroke-width="3.2"/>
<path d="M640.14 261.49A43.03 40.4 0 0 1 638.7 256.76" fill="none" stroke="#e8e020" stroke-width="3.2"/>
<text x="648.22" y="266.8" font-size="9.5" fill="#fff" text-anchor="middle">0</text>
<text x="645.39" y="245.36" font-size="9.5" fill="#fff" text-anchor="middle">5</text>
<text x="659" y="226.08" font-size="9.5" fill="#fff" text-anchor="middle">10</text>
<text x="680.7" y="218.9" font-size="9.5" fill="#fff" text-anchor="middle">15</text>
<text x="702.4" y="226.08" font-size="9.5" fill="#fff" text-anchor="middle">20</text>
<text x="714.51" y="244.46" font-size="9.5" fill="#fff" text-anchor="middle">25</text>
<text x="709.88" y="265.9" font-size="9.5" fill="#fff" text-anchor="middle">30</text>
<ellipse cx="680.7" cy="248" rx="9" ry="8.2" fill="#303030"/>
<g fill="none" stroke="#777" stroke-width="1"><path d="M678.9 225.2v3.2a4.6 4.6 0 1 0 3.6 0v-3.200z"/><path d="M674.7 232.2h-5M686.7 232.2h5"/><path d="M672.2 232.2l-2.400-1.600v3.200zM689.2 232.2l2.400-1.600v3.200z" fill="#777" stroke="none"/></g>
<path d="M671.88 260.23L708.02 217.97L706.98 217.03L669.12 257.77z" fill="#fff"/>
<text x="680.7" y="269.5" font-size="9.5" fill="#8a8a8a" text-anchor="middle">bar</text>
<text x="680.7" y="284" font-size="14.5" fill="#fff" text-anchor="middle" stroke="#fff" stroke-width=".3">19.9</text>
<ellipse cx="842.3" cy="248" rx="58.2" ry="54.3" fill="url(#bz1)"/>
<ellipse cx="842.3" cy="248" rx="52.3" ry="49.2" fill="url(#bz2)"/>
<ellipse cx="842.3" cy="248.3" rx="48.3" ry="45.5" fill="#000"/>
<path d="M806.05 271.39A43.98 41.3 0 1 1 878.55 271.39" fill="none" stroke="#262626" stroke-width="2.6" stroke-dasharray="13 1.5"/>
<path d="M816.45 214.59A43.98 41.3 0 0 1 868.15 214.59" fill="none" stroke="#3e3e3e" stroke-width="2.4" stroke-dasharray="13 1.5"/>
<path d="M805.48 268.9A43.03 40.4 0 0 1 806.66 225.36" fill="none" stroke="#d8141c" stroke-width="3.2"/>
<path d="M806.66 225.36A43.03 40.4 0 0 1 810.44 220.84" fill="none" stroke="#e8e020" stroke-width="3.2"/>
<text x="809.82" y="266.8" font-size="9.5" fill="#fff" text-anchor="middle">0</text>
<text x="808.3" y="241.13" font-size="9.5" fill="#fff" text-anchor="middle">2</text>
<text x="827.11" y="221.55" font-size="9.5" fill="#fff" text-anchor="middle">4</text>
<text x="855.99" y="221.55" font-size="9.5" fill="#fff" text-anchor="middle">6</text>
<text x="874.8" y="240.23" font-size="9.5" fill="#fff" text-anchor="middle">8</text>
<text x="871.48" y="265.9" font-size="9.5" fill="#fff" text-anchor="middle">10</text>
<ellipse cx="842.3" cy="248" rx="9" ry="8.2" fill="#303030"/>
<g fill="none" stroke="#777" stroke-width="1"><path d="M840.5 225.2v3.2a4.6 4.6 0 1 0 3.6 0v-3.200z"/><path d="M836.3 232.2h-5M848.3 232.2h5"/><path d="M833.8 232.2l-2.400-1.600v3.200zM850.8 232.2l2.400-1.600v3.200z" fill="#777" stroke="none"/></g>
<path d="M842.54 263.16L846.2 207.56L844.8 207.44L838.86 262.84z" fill="#fff"/>
<text x="842.3" y="269.5" font-size="9.5" fill="#8a8a8a" text-anchor="middle">bar</text>
<text x="842.3" y="284" font-size="14.5" fill="#fff" text-anchor="middle" stroke="#fff" stroke-width=".3">5.2</text>
<ellipse cx="351" cy="507.7" rx="58.2" ry="54.3" fill="url(#bz1)"/>
<ellipse cx="351" cy="507.7" rx="52.3" ry="49.2" fill="url(#bz2)"/>
<ellipse cx="351" cy="508" rx="48.3" ry="45.5" fill="#000"/>
<path d="M314.75 531.09A43.98 41.3 0 1 1 387.25 531.09" fill="none" stroke="#262626" stroke-width="2.6" stroke-dasharray="13 1.5"/>
<path d="M325.15 474.29A43.98 41.3 0 0 1 376.85 474.29" fill="none" stroke="#3e3e3e" stroke-width="2.4" stroke-dasharray="13 1.5"/>
<path d="M393.7 512.68A43.03 40.4 0 0 1 388.83 526.94" fill="none" stroke="#d8141c" stroke-width="3.2"/>
<path d="M393.89 504.48A43.03 40.4 0 0 1 393.7 512.68" fill="none" stroke="#e8e020" stroke-width="3.2"/>
<text x="318.52" y="526.5" font-size="9.5" fill="#fff" text-anchor="middle">0</text>
<text x="317.19" y="505.06" font-size="9.5" fill="#fff" text-anchor="middle">20</text>
<text x="329.3" y="485.78" font-size="9.5" fill="#fff" text-anchor="middle">40</text>
<text x="351" y="478.6" font-size="9.5" fill="#fff" text-anchor="middle">60</text>
<text x="372.7" y="485.78" font-size="9.5" fill="#fff" text-anchor="middle">80</text>
<text x="383.61" y="504.16" font-size="9.5" fill="#fff" text-anchor="middle">100</text>
<text x="379.48" y="525.6" font-size="9.5" fill="#fff" text-anchor="middle">120</text>
<ellipse cx="351" cy="507.7" rx="9" ry="8.2" fill="#303030"/>
<g fill="none" stroke="#777" stroke-width="1"><path d="M349.2 484.9v3.2a4.6 4.6 0 1 0 3.6 0v-3.200z"/><path d="M345 491.9h-5M357 491.9h5"/><path d="M342.5 491.9l-2.400-1.600v3.200zM359.5 491.9l2.400-1.600v3.200z" fill="#777" stroke="none"/></g>
<path d="M343.1 521.08L374.57 475.61L373.43 474.79L340.1 518.92z" fill="#fff"/>
<text x="351" y="529.2" font-size="9.5" fill="#8a8a8a" text-anchor="middle">°C</text>
<text x="351" y="543.7" font-size="14.5" fill="#fff" text-anchor="middle" stroke="#fff" stroke-width=".3">77</text>
<ellipse cx="511.8" cy="507.7" rx="58.2" ry="54.3" fill="url(#bz1)"/>
<ellipse cx="511.8" cy="507.7" rx="52.3" ry="49.2" fill="url(#bz2)"/>
<ellipse cx="511.8" cy="508" rx="48.3" ry="45.5" fill="#000"/>
<path d="M475.55 531.09A43.98 41.3 0 1 1 548.05 531.09" fill="none" stroke="#262626" stroke-width="2.6" stroke-dasharray="13 1.5"/>
<path d="M485.95 474.29A43.98 41.3 0 0 1 537.65 474.29" fill="none" stroke="#3e3e3e" stroke-width="2.4" stroke-dasharray="13 1.5"/>
<path d="M554.82 507.22A43.03 40.4 0 0 1 549.63 526.94" fill="none" stroke="#d8141c" stroke-width="3.2"/>
<path d="M554.36 501.76A43.03 40.4 0 0 1 554.82 507.22" fill="none" stroke="#e8e020" stroke-width="3.2"/>
<path d="M551.95 493.18A43.03 40.4 0 0 1 553.67 498.4" fill="none" stroke="#e8e020" stroke-width="3.2"/>
<text x="479.32" y="526.5" font-size="9.5" fill="#fff" text-anchor="middle">0</text>
<text x="477.99" y="505.06" font-size="9.5" fill="#fff" text-anchor="middle">20</text>
<text x="490.1" y="485.78" font-size="9.5" fill="#fff" text-anchor="middle">40</text>
<text x="511.8" y="478.6" font-size="9.5" fill="#fff" text-anchor="middle">60</text>
<text x="533.5" y="485.78" font-size="9.5" fill="#fff" text-anchor="middle">80</text>
<text x="544.41" y="504.16" font-size="9.5" fill="#fff" text-anchor="middle">100</text>
<text x="540.28" y="525.6" font-size="9.5" fill="#fff" text-anchor="middle">120</text>
<ellipse cx="511.8" cy="507.7" rx="9" ry="8.2" fill="#303030"/>
<g fill="none" stroke="#6e6e6e" stroke-width="1"><path d="M506.6 485.4v3a4.400 4.400 0 1 0 3.400 0v-3z"/><path d="M517.3 484.9v11M517.3 485.4h3M517.3 487.9h3M517.3 490.4h3" stroke="#a8a8a8"/></g>
<path d="M521.12 520.11L493.61 472.66L492.39 473.34L517.88 521.89z" fill="#fff"/>
<text x="511.8" y="529.2" font-size="9.5" fill="#8a8a8a" text-anchor="middle">°C</text>
<text x="511.8" y="543.7" font-size="14.5" fill="#fff" text-anchor="middle" stroke="#fff" stroke-width=".3">47</text>
<ellipse cx="680.7" cy="507.7" rx="58.2" ry="54.3" fill="url(#bz1)"/>
<ellipse cx="680.7" cy="507.7" rx="52.3" ry="49.2" fill="url(#bz2)"/>
<ellipse cx="680.7" cy="508" rx="48.3" ry="45.5" fill="#000"/>
<path d="M644.45 531.09A43.98 41.3 0 1 1 716.95 531.09" fill="none" stroke="#262626" stroke-width="2.6" stroke-dasharray="13 1.5"/>
<path d="M654.85 474.29A43.98 41.3 0 0 1 706.55 474.29" fill="none" stroke="#3e3e3e" stroke-width="2.4" stroke-dasharray="13 1.5"/>
<path d="M723.72 507.22A43.03 40.4 0 0 1 718.53 526.94" fill="none" stroke="#d8141c" stroke-width="3.2"/>
<path d="M723.26 501.76A43.03 40.4 0 0 1 723.72 507.22" fill="none" stroke="#e8e020" stroke-width="3.2"/>
<path d="M720.85 493.18A43.03 40.4 0 0 1 722.57 498.4" fill="none" stroke="#e8e020" stroke-width="3.2"/>
<text x="648.22" y="526.5" font-size="9.5" fill="#fff" text-anchor="middle">0</text>
<text x="646.89" y="505.06" font-size="9.5" fill="#fff" text-anchor="middle">20</text>
<text x="659" y="485.78" font-size="9.5" fill="#fff" text-anchor="middle">40</text>
<text x="680.7" y="478.6" font-size="9.5" fill="#fff" text-anchor="middle">60</text>
<text x="702.4" y="485.78" font-size="9.5" fill="#fff" text-anchor="middle">80</text>
<text x="713.31" y="504.16" font-size="9.5" fill="#fff" text-anchor="middle">100</text>
<text x="709.18" y="525.6" font-size="9.5" fill="#fff" text-anchor="middle">120</text>
<ellipse cx="680.7" cy="507.7" rx="9" ry="8.2" fill="#303030"/>
<g fill="none" stroke="#6e6e6e" stroke-width="1"><path d="M675.5 485.4v3a4.400 4.400 0 1 0 3.400 0v-3z"/><path d="M686.2 484.9v11M686.2 485.4h3M686.2 487.9h3M686.2 490.4h3" stroke="#a8a8a8"/></g>
<path d="M685.33 521.71L675.69 468.89L674.31 469.11L681.67 522.29z" fill="#fff"/>
<text x="680.7" y="529.2" font-size="9.5" fill="#8a8a8a" text-anchor="middle">°C</text>
<text x="680.7" y="543.7" font-size="14.5" fill="#fff" text-anchor="middle" stroke="#fff" stroke-width=".3">64</text>
<ellipse cx="842.3" cy="507.7" rx="58.2" ry="54.3" fill="url(#bz1)"/>
<ellipse cx="842.3" cy="507.7" rx="52.3" ry="49.2" fill="url(#bz2)"/>
<ellipse cx="842.3" cy="508" rx="48.3" ry="45.5" fill="#000"/>
<path d="M806.05 531.09A43.98 41.3 0 1 1 878.55 531.09" fill="none" stroke="#262626" stroke-width="2.6" stroke-dasharray="13 1.5"/>
<path d="M816.45 474.29A43.98 41.3 0 0 1 868.15 474.29" fill="none" stroke="#3e3e3e" stroke-width="2.4" stroke-dasharray="13 1.5"/>
<path d="M885 512.68A43.03 40.4 0 0 1 880.13 526.94" fill="none" stroke="#d8141c" stroke-width="3.2"/>
<path d="M885.19 504.48A43.03 40.4 0 0 1 885 512.68" fill="none" stroke="#e8e020" stroke-width="3.2"/>
<text x="809.82" y="526.5" font-size="9.5" fill="#fff" text-anchor="middle">0</text>
<text x="808.49" y="505.06" font-size="9.5" fill="#fff" text-anchor="middle">20</text>
<text x="820.6" y="485.78" font-size="9.5" fill="#fff" text-anchor="middle">40</text>
<text x="842.3" y="478.6" font-size="9.5" fill="#fff" text-anchor="middle">60</text>
<text x="864" y="485.78" font-size="9.5" fill="#fff" text-anchor="middle">80</text>
<text x="874.91" y="504.16" font-size="9.5" fill="#fff" text-anchor="middle">100</text>
<text x="870.78" y="525.6" font-size="9.5" fill="#fff" text-anchor="middle">120</text>
<ellipse cx="842.3" cy="507.7" rx="9" ry="8.2" fill="#303030"/>
<g fill="none" stroke="#777" stroke-width="1"><path d="M840.5 484.9v3.2a4.6 4.6 0 1 0 3.6 0v-3.200z"/><path d="M836.3 491.9h-5M848.3 491.9h5"/><path d="M833.8 491.9l-2.400-1.600v3.200zM850.8 491.9l2.400-1.600v3.200z" fill="#777" stroke="none"/></g>
<path d="M834.5 521.09L866.07 475.61L864.93 474.79L831.5 518.91z" fill="#fff"/>
<text x="842.3" y="529.2" font-size="9.5" fill="#8a8a8a" text-anchor="middle">°C</text>
<text x="842.3" y="543.7" font-size="14.5" fill="#fff" text-anchor="middle" stroke="#fff" stroke-width=".3">77</text>
<ellipse cx="432" cy="376.4" rx="86.500" ry="80.500" fill="url(#bz1)"/>
<ellipse cx="432" cy="376.4" rx="80" ry="74.300" fill="url(#bz2)"/>
<ellipse cx="432" cy="376.7" rx="75.800" ry="70" fill="#000"/>
<path d="M372.9 411.32A70.07 65 0 1 1 491.1 411.32" fill="none" stroke="#2c2c2c" stroke-width="2.400" stroke-dasharray="9 1.500"/>
<path d="M386.96 326.61A70.07 65 0 0 1 477.04 326.61" fill="none" stroke="#3a3a3a" stroke-width="2.200" stroke-dasharray="9 1.500"/>
<path d="M500.79 388.77A70.07 65 0 0 1 494.45 405.88" fill="none" stroke="#d8141c" stroke-width="3"/>
<path d="M502.02 373.86A70.07 65 0 0 1 500.79 388.77" fill="none" stroke="#e8e020" stroke-width="3"/>
<path d="M500.83 364.24A70.07 65 0 0 1 502.02 373.86" fill="none" stroke="#3a4a18" stroke-width="3"/>
<text x="378.05" y="405.68" font-size="9.500" fill="#fff" text-anchor="middle" stroke="#fff" stroke-width=".2">0</text>
<text x="374.42" y="367.41" font-size="9.500" fill="#fff" text-anchor="middle" stroke="#fff" stroke-width=".2">500</text>
<text x="395.29" y="336.12" font-size="9.500" fill="#fff" text-anchor="middle" stroke="#fff" stroke-width=".2">1000</text>
<text x="432" y="321.8" font-size="9.500" fill="#fff" text-anchor="middle" stroke="#fff" stroke-width=".2">1500</text>
<text x="468.71" y="336.12" font-size="9.500" fill="#fff" text-anchor="middle" stroke="#fff" stroke-width=".2">2000</text>
<text x="489.08" y="367.41" font-size="9.500" fill="#fff" text-anchor="middle" stroke="#fff" stroke-width=".2">2500</text>
<text x="480.95" y="403.18" font-size="9.500" fill="#fff" text-anchor="middle" stroke="#fff" stroke-width=".2">3000</text>
<ellipse cx="431.7" cy="374.4" rx="9.300" ry="8.800" fill="#2e2e2e"/>
<text x="431" y="345.6" font-size="8.500" fill="#8a8a8a" text-anchor="middle" textLength="47.500" lengthAdjust="spacingAndGlyphs">Engine Speed</text>
<text x="432" y="354.6" font-size="8.500" fill="#8a8a8a" text-anchor="middle">Port</text>
<path d="M438.31 391.25L411.27 311.32L410.13 311.68L434.89 392.35z" fill="#fff"/>
<text x="432.5" y="399.9" font-size="8.500" fill="#8a8a8a" text-anchor="middle">l/min</text>
<text x="433" y="414.6" font-size="15" fill="#fff" text-anchor="middle" stroke="#fff" stroke-width=".3">1289</text>
<path d="M411.5 418.4h39" stroke="#4a4a4a" stroke-width="1"/>
<g fill="none" stroke="#4a4a4a" stroke-width="1"><circle cx="410" cy="429.9" r="4.800"/><path d="M410 426.4v4M403.5 430.4a6.500 6.500 0 0 1 6-5"/></g>
<text x="421.5" y="434.2" font-size="15" fill="#7a7a7a" stroke="#7a7a7a" stroke-width=".4">inv</text>
<text x="450" y="433.4" font-size="7.500" fill="#8a8a8a" font-weight="bold">%</text>
<ellipse cx="762.3" cy="376.4" rx="86.500" ry="80.500" fill="url(#bz1)"/>
<ellipse cx="762.3" cy="376.4" rx="80" ry="74.300" fill="url(#bz2)"/>
<ellipse cx="762.3" cy="376.7" rx="75.800" ry="70" fill="#000"/>
<path d="M703.2 411.32A70.07 65 0 1 1 821.4 411.32" fill="none" stroke="#2c2c2c" stroke-width="2.400" stroke-dasharray="9 1.500"/>
<path d="M717.26 326.61A70.07 65 0 0 1 807.34 326.61" fill="none" stroke="#3a3a3a" stroke-width="2.200" stroke-dasharray="9 1.500"/>
<path d="M831.09 388.77A70.07 65 0 0 1 824.75 405.88" fill="none" stroke="#d8141c" stroke-width="3"/>
<path d="M832.32 373.86A70.07 65 0 0 1 831.09 388.77" fill="none" stroke="#e8e020" stroke-width="3"/>
<path d="M831.13 364.24A70.07 65 0 0 1 832.32 373.86" fill="none" stroke="#3a4a18" stroke-width="3"/>
<text x="708.35" y="405.68" font-size="9.500" fill="#fff" text-anchor="middle" stroke="#fff" stroke-width=".2">0</text>
<text x="704.72" y="367.41" font-size="9.500" fill="#fff" text-anchor="middle" stroke="#fff" stroke-width=".2">500</text>
<text x="725.59" y="336.12" font-size="9.500" fill="#fff" text-anchor="middle" stroke="#fff" stroke-width=".2">1000</text>
<text x="762.3" y="321.8" font-size="9.500" fill="#fff" text-anchor="middle" stroke="#fff" stroke-width=".2">1500</text>
<text x="799.01" y="336.12" font-size="9.500" fill="#fff" text-anchor="middle" stroke="#fff" stroke-width=".2">2000</text>
<text x="819.38" y="367.41" font-size="9.500" fill="#fff" text-anchor="middle" stroke="#fff" stroke-width=".2">2500</text>
<text x="811.25" y="403.18" font-size="9.500" fill="#fff" text-anchor="middle" stroke="#fff" stroke-width=".2">3000</text>
<ellipse cx="762" cy="374.4" rx="9.300" ry="8.800" fill="#2e2e2e"/>
<text x="761.8" y="345.6" font-size="8.500" fill="#8a8a8a" text-anchor="middle" textLength="66" lengthAdjust="spacingAndGlyphs">Engine Speed Stbd</text>
<path d="M766.38 392.03L752.59 309.51L751.41 309.69L762.82 392.57z" fill="#fff"/>
<text x="762.8" y="399.9" font-size="8.500" fill="#8a8a8a" text-anchor="middle">l/min</text>
<text x="763.3" y="414.6" font-size="15" fill="#fff" text-anchor="middle" stroke="#fff" stroke-width=".3">1230</text>
<path d="M741.8 418.4h39" stroke="#4a4a4a" stroke-width="1"/>
<g fill="none" stroke="#4a4a4a" stroke-width="1"><circle cx="740.3" cy="429.9" r="4.800"/><path d="M740.3 426.4v4M733.8 430.4a6.500 6.500 0 0 1 6-5"/></g>
<text x="751.8" y="434.2" font-size="15" fill="#7a7a7a" stroke="#7a7a7a" stroke-width=".4">inv</text>
<text x="780.3" y="433.4" font-size="7.500" fill="#8a8a8a" font-weight="bold">%</text>
<rect x="274.5" y="314.500" width="60.8" height="119" rx="8" fill="#202020" stroke="#161616" stroke-width="1.500"/><rect x="277.7" y="318" width="54.4" height="112.500" rx="7" fill="none" stroke="#2b2b2b" stroke-width="1"/>
<rect x="280.5" y="321" width="49.5" height="107.500" rx="6" fill="url(#pnl)"/>
<g fill="none" stroke="#484848" stroke-width="1"><circle cx="305" cy="343.300" r="6.300"/><circle cx="305" cy="343.300" r="8.800" stroke-dasharray="2.200 1.300" stroke-width="1.600"/></g>
<text x="305" y="346.800" font-size="9.500" fill="#484848" text-anchor="middle">N</text>
<g fill="none" stroke="#9a9a9a" stroke-width="1.100"><path d="M304.3 366v3.200a6.300 6.300 0 1 0 4.400 0v-3.200z"/><path d="M302 376.500q1.500-2 3-0t3 0 3 0" stroke-width="1"/><path d="M295 367v13"/><path d="M295.5 373.500l3 1.800-3 1.800z" fill="#9a9a9a" stroke="none"/></g>
<g fill="none" stroke="#8a8a8a" stroke-width="1.100"><rect x="294.5" y="402.500" width="21" height="11"/><path d="M297 402.500v-2.500h3.500v2.500M309.5 402.500v-2.500h3.500v2.500M297 405.500h3M309.7 405.500h3M311.2 404v3"/></g>
<rect x="856.5" y="314.500" width="60.8" height="119" rx="8" fill="#202020" stroke="#161616" stroke-width="1.500"/><rect x="859.7" y="318" width="54.4" height="112.500" rx="7" fill="none" stroke="#2b2b2b" stroke-width="1"/>
<rect x="863" y="321" width="49" height="107.500" rx="6" fill="url(#pnl)"/>
<g fill="none" stroke="#484848" stroke-width="1"><circle cx="887.5" cy="343.300" r="6.300"/><circle cx="887.5" cy="343.300" r="8.800" stroke-dasharray="2.200 1.300" stroke-width="1.600"/></g>
<text x="887.5" y="346.800" font-size="9.500" fill="#484848" text-anchor="middle">N</text>
<g fill="none" stroke="#9a9a9a" stroke-width="1.100"><path d="M886.8 366v3.200a6.300 6.300 0 1 0 4.400 0v-3.200z"/><path d="M884.5 376.500q1.500-2 3-0t3 0 3 0" stroke-width="1"/><path d="M877.5 367v13"/><path d="M878 373.500l3 1.800-3 1.800z" fill="#9a9a9a" stroke="none"/></g>
<g fill="none" stroke="#8a8a8a" stroke-width="1.100"><rect x="877" y="402.500" width="21" height="11"/><path d="M879.5 402.500v-2.500h3.500v2.500M892 402.500v-2.500h3.500v2.500M879.5 405.500h3M892.2 405.500h3M893.7 404v3"/></g>
<rect x="527" y="315" width="136.600" height="118.800" rx="8" fill="#202020" stroke="#161616" stroke-width="1.500"/><rect x="530.200" y="318" width="130.200" height="112.800" rx="7" fill="none" stroke="#2b2b2b" stroke-width="1"/>
<rect x="533.500" y="321" width="125.200" height="107.500" rx="6" fill="url(#pnl)"/>
<path d="M540 358.100h113M540 390.200h113" stroke="#7a7a7a" stroke-width="1"/>
<text x="554" y="348.6" font-size="14.500" fill="#343434" stroke="#343434" stroke-width=".3">inv</text>
<text x="554" y="380.3" font-size="14.500" fill="#343434" stroke="#343434" stroke-width=".3">inv</text>
<text x="619" y="348.6" font-size="14.500" fill="#343434" stroke="#343434" stroke-width=".3">inv</text>
<text x="619" y="380.3" font-size="14.500" fill="#343434" stroke="#343434" stroke-width=".3">inv</text>
<text x="576.600" y="412.700" font-size="15" fill="#fff" text-anchor="end" stroke="#fff" stroke-width=".3">124</text>
<text x="639" y="412.700" font-size="15" fill="#fff" text-anchor="end" stroke="#fff" stroke-width=".3" textLength="21.500" lengthAdjust="spacingAndGlyphs">121</text>
<g fill="none" stroke="#5e5e5e" stroke-width="1"><rect x="590" y="329.500" width="12.500" height="15.500"/><path d="M590 333h12.500M592.500 338.500h7.500M590 341.500h12.500"/></g>
<text x="596.300" y="353" font-size="6.500" fill="#d0d0d0" text-anchor="middle" font-weight="bold">%</text>
<g fill="none" stroke="#6a6a6a" stroke-width="1"><rect x="590.500" y="363.500" width="11" height="14"/><path d="M590.500 368h11M590.500 374l11-4.500" /></g>
<text x="596.300" y="385.500" font-size="7.500" fill="#e0e0e0" text-anchor="middle" font-weight="bold">l/h</text>
<g fill="#9a9a9a" stroke="#b0b0b0" stroke-width=".8"><path d="M590 394.500h12.500M590 408.500h12.500" fill="none" stroke-width="1.300"/><path d="M591 395c0 4 4 5 5.250 6.500 1.250-1.500 5.250-2.500 5.250-6.500z" fill="#5a5a5a"/><path d="M591 408c0-3.500 4-5 5.250-6.500 1.250 1.500 5.250 3 5.250 6.500z"/></g>
<text x="596.300" y="416.500" font-size="7.500" fill="#e0e0e0" text-anchor="middle" font-weight="bold">h</text>
<rect x="266" y="584.300" width="662" height="28.500" fill="url(#bar)"/>
<rect x="265.700" y="612.700" width="662.300" height="1.300" fill="#e4e2d8"/>
<rect x="927" y="118" width="1.100" height="496" fill="#d0d0d0"/>
<rect x="265.700" y="118" width="1" height="496" fill="#303030"/>
<text x="596.600" y="601.600" font-size="8.300" font-weight="bold" fill="#fff" text-anchor="middle" textLength="51.600" lengthAdjust="spacingAndGlyphs">Engine Analog</text>
<g fill="none" stroke="#9a9a9a" stroke-width="1"><path d="M284.700 589l-10 17.500h20z"/><path d="M284.700 591.500l-7.800 13.800h15.600z" fill="#8a8a8a" stroke="none"/></g><path d="M284.700 595v6" stroke="#1a1a1a" stroke-width="2"/><circle cx="284.700" cy="603.300" r="1.100" fill="#1a1a1a"/>
<path d="M306.400 587v22M890.800 587v22" stroke="#6e6e6e" stroke-width="1"/>
<g fill="#8e8e8e"><circle cx="324.800" cy="591.500" r="2"/><path d="M322 595h4.500v9h2v2h-7v-2h2v-7h-1.500z"/></g>
<path d="M878.500 606v-10a5 5 0 0 0-10 0v6" fill="none" stroke="#8e8e8e" stroke-width="2.800"/><path d="M864.500 601h8l-4 5.800z" fill="#8e8e8e"/>
<g fill="#8e8e8e"><path d="M909.500 588.500l10 9h-2.500v8.500h-5v-5.500h-5v5.500h-5v-8.500h-2.500z" transform="translate(0 .5)"/><rect x="914.500" y="589.500" width="2.200" height="4"/></g>
</svg>
<div class="abs" style="left:131px;top:616px;width:933px;height:20px;background:#ece9d8;border-top:1px solid #f8f7f0;border-bottom:1.300px solid #a8a592"></div>
<i class="abs" style="left:741px;top:618px;width:1px;height:16px;background:#e2dfce"></i><i class="abs" style="left:871px;top:618px;width:1px;height:16px;background:#e2dfce"></i>
<svg class="abs" style="left:746px;top:620px" width="12" height="12" viewBox="0 0 12 12"><defs><radialGradient id="gi" cx=".4" cy=".3" r=".8"><stop offset="0" stop-color="#bfe0fa"/><stop offset="1" stop-color="#3d8fd8"/></radialGradient></defs><circle cx="6" cy="6" r="5.500" fill="url(#gi)" stroke="#8ab8e0" stroke-width=".6"/><path d="M6 5v4" stroke="#fff" stroke-width="1.600"/><circle cx="6" cy="3.200" r="1" fill="#fff"/></svg>
<span class="tb9" style="left:761px;top:621px;letter-spacing:-.33px">Connection Alert History</span>
<svg class="abs" style="left:876px;top:619px" width="11" height="13" viewBox="0 0 11 13"><path d="M2.800 6V4a2.700 2.700 0 0 1 5.400 0v2" fill="none" stroke="#a8a820" stroke-width="1.500"/><rect x="1" y="5.600" width="9" height="6.800" rx=".8" fill="#e8d838" stroke="#a8a020" stroke-width=".7"/></svg>
<span class="tb9" style="left:889.500px;top:621px;letter-spacing:-.5px">Encryption: AES256-SHA</span>
</div></div>
  <div id="status"><span class="tb9" style="left:0px;top:3px;letter-spacing:-.2px">Fertig</span>
<i class="abs" style="left:700.5px;top:2px;width:1px;height:13px;background:#cfccbb"></i>
<i class="abs" style="left:718.7px;top:2px;width:1px;height:13px;background:#cfccbb"></i>
<i class="abs" style="left:736.9px;top:2px;width:1px;height:13px;background:#cfccbb"></i>
<i class="abs" style="left:755.1px;top:2px;width:1px;height:13px;background:#cfccbb"></i>
<i class="abs" style="left:773.3px;top:2px;width:1px;height:13px;background:#cfccbb"></i>
<i class="abs" style="left:791.5px;top:2px;width:1px;height:13px;background:#cfccbb"></i>
<svg class="abs" style="left:797px;top:2px" width="12" height="12" viewBox="0 0 12 12"><defs><radialGradient id="gg" cx=".4" cy=".3" r=".8"><stop offset="0" stop-color="#8fd0e8"/><stop offset="1" stop-color="#1d5c8c"/></radialGradient></defs><circle cx="6" cy="6" r="5.500" fill="url(#gg)"/><path d="M3 3.500c2-1 3 .5 2.500 2S7 8 8.500 7.500 9 4 7.500 3" fill="#4fae5e" opacity=".8"/></svg>
<span class="tb9" style="left:811px;top:3px;letter-spacing:-.2px">Internet</span>
<i class="abs" style="left:951px;top:2px;width:1px;height:13px;background:#cfccbb"></i>
<svg class="abs" style="left:960px;top:3px" width="14" height="11" viewBox="0 0 14 11"><path d="M1 5l5-3.500v2.500c3 0 5 1.500 6 5-1.500-2-3.500-2.800-6-2.800v2.500z" fill="#d3d3cf" stroke="#a8a8a0" stroke-width=".6"/><rect x="7" y="6" width="5" height="4.500" fill="#a8a8a8"/></svg>
<i class="arr" style="left:978px;top:7px"></i>
<i class="abs" style="left:991px;top:2px;width:1px;height:13px;background:#cfccbb"></i>
<svg class="abs" style="left:995px;top:2px" width="12" height="12" viewBox="0 0 12 12"><circle cx="4.800" cy="4.800" r="3.400" fill="#e8f1ff" stroke="#4a6fb8" stroke-width="1.200"/><path d="M7.300 7.300l3.500 3.500" stroke="#7a6a4a" stroke-width="1.800"/><path d="M3.200 4.800h3.200M4.800 3.200v3.200" stroke="#2a4f9a" stroke-width="1"/></svg>
<span class="tb9" style="left:1006px;top:3px;letter-spacing:-.1px">100%</span>
<i class="arr" style="left:1040px;top:7px"></i>
<svg class="abs" style="left:1050px;top:5px" width="11" height="11" viewBox="0 0 11 11"><g fill="#b8b5a2"><rect x="8" y="0" width="2" height="2"/><rect x="4" y="4" width="2" height="2"/><rect x="8" y="4" width="2" height="2"/><rect x="0" y="8" width="2" height="2"/><rect x="4" y="8" width="2" height="2"/><rect x="8" y="8" width="2" height="2"/></g></svg>
</div>
</div>
</body>
</html>
